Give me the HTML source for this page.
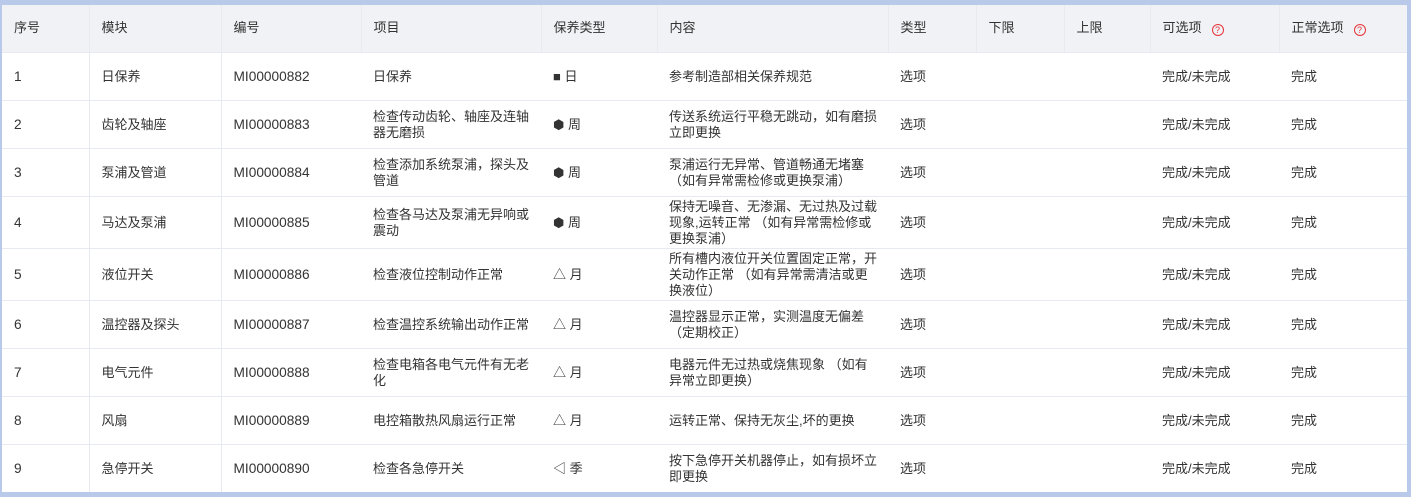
<!DOCTYPE html>
<html><head><meta charset="utf-8"><style>
*{margin:0;padding:0;box-sizing:border-box}
body{width:1411px;height:497px;background:#b9c9ea;font-family:"Liberation Sans","Noto Sans CJK SC",sans-serif;font-size:13px;color:#333;overflow:hidden;position:relative}
#w{position:absolute;left:2px;top:5px;width:1405px;height:487px;background:#fff;overflow:hidden}
table{border-collapse:collapse;table-layout:fixed;width:1405px}
td,th{padding:2px 0 0 12px;text-align:left;font-weight:normal;vertical-align:middle;line-height:16px;border-bottom:1px solid #e6e9f0;white-space:nowrap}
th{background:#f0f2f5;height:47px;border-right:1px solid #e8eaef;color:#333;padding-top:0}
td.b{border-right:1px solid #e6e9f0}
.m{font-size:13.7px}
.q{display:inline-block;width:12px;height:12px;border:1px solid #e8343a;border-radius:50%;color:#e8343a;font-size:9px;line-height:10px;text-align:center;margin-left:10px;vertical-align:-1px}
</style></head><body><div id="w"><table>
<colgroup><col style="width:87px"><col style="width:132px"><col style="width:140px"><col style="width:180px"><col style="width:116px"><col style="width:231px"><col style="width:88px"><col style="width:88px"><col style="width:86px"><col style="width:129px"><col style="width:128px"></colgroup>
<tr><th>序号</th><th>模块</th><th>编号</th><th>项目</th><th>保养类型</th><th>内容</th><th>类型</th><th>下限</th><th>上限</th><th>可选项<span class="q">?</span></th><th>正常选项<span class="q">?</span></th></tr>
<tr style="height:48px"><td class="b m">1</td><td class="b">日保养</td><td class="m">MI00000882</td><td>日保养</td><td>■ 日</td><td>参考制造部相关保养规范</td><td>选项</td><td></td><td></td><td>完成/未完成</td><td>完成</td></tr>
<tr style="height:48px"><td class="b m">2</td><td class="b">齿轮及轴座</td><td class="m">MI00000883</td><td>检查传动齿轮、轴座及连轴<br>器无磨损</td><td>⬢ 周</td><td>传送系统运行平稳无跳动，如有磨损<br>立即更换</td><td>选项</td><td></td><td></td><td>完成/未完成</td><td>完成</td></tr>
<tr style="height:48px"><td class="b m">3</td><td class="b">泵浦及管道</td><td class="m">MI00000884</td><td>检查添加系统泵浦，探头及<br>管道</td><td>⬢ 周</td><td>泵浦运行无异常、管道畅通无堵塞<br>（如有异常需检修或更换泵浦）</td><td>选项</td><td></td><td></td><td>完成/未完成</td><td>完成</td></tr>
<tr style="height:52px"><td class="b m">4</td><td class="b">马达及泵浦</td><td class="m">MI00000885</td><td>检查各马达及泵浦无异响或<br>震动</td><td>⬢ 周</td><td>保持无噪音、无渗漏、无过热及过载<br>现象,运转正常 （如有异常需检修或<br>更换泵浦）</td><td>选项</td><td></td><td></td><td>完成/未完成</td><td>完成</td></tr>
<tr style="height:52px"><td class="b m">5</td><td class="b">液位开关</td><td class="m">MI00000886</td><td>检查液位控制动作正常</td><td>△ 月</td><td>所有槽内液位开关位置固定正常，开<br>关动作正常 （如有异常需清洁或更<br>换液位）</td><td>选项</td><td></td><td></td><td>完成/未完成</td><td>完成</td></tr>
<tr style="height:48px"><td class="b m">6</td><td class="b">温控器及探头</td><td class="m">MI00000887</td><td>检查温控系统输出动作正常</td><td>△ 月</td><td>温控器显示正常，实测温度无偏差<br>（定期校正）</td><td>选项</td><td></td><td></td><td>完成/未完成</td><td>完成</td></tr>
<tr style="height:48px"><td class="b m">7</td><td class="b">电气元件</td><td class="m">MI00000888</td><td>检查电箱各电气元件有无老<br>化</td><td>△ 月</td><td>电器元件无过热或烧焦现象 （如有<br>异常立即更换）</td><td>选项</td><td></td><td></td><td>完成/未完成</td><td>完成</td></tr>
<tr style="height:48px"><td class="b m">8</td><td class="b">风扇</td><td class="m">MI00000889</td><td>电控箱散热风扇运行正常</td><td>△ 月</td><td>运转正常、保持无灰尘,坏的更换</td><td>选项</td><td></td><td></td><td>完成/未完成</td><td>完成</td></tr>
<tr style="height:48px"><td class="b m">9</td><td class="b">急停开关</td><td class="m">MI00000890</td><td>检查各急停开关</td><td>◁ 季</td><td>按下急停开关机器停止，如有损坏立<br>即更换</td><td>选项</td><td></td><td></td><td>完成/未完成</td><td>完成</td></tr>
</table></div></body></html>
